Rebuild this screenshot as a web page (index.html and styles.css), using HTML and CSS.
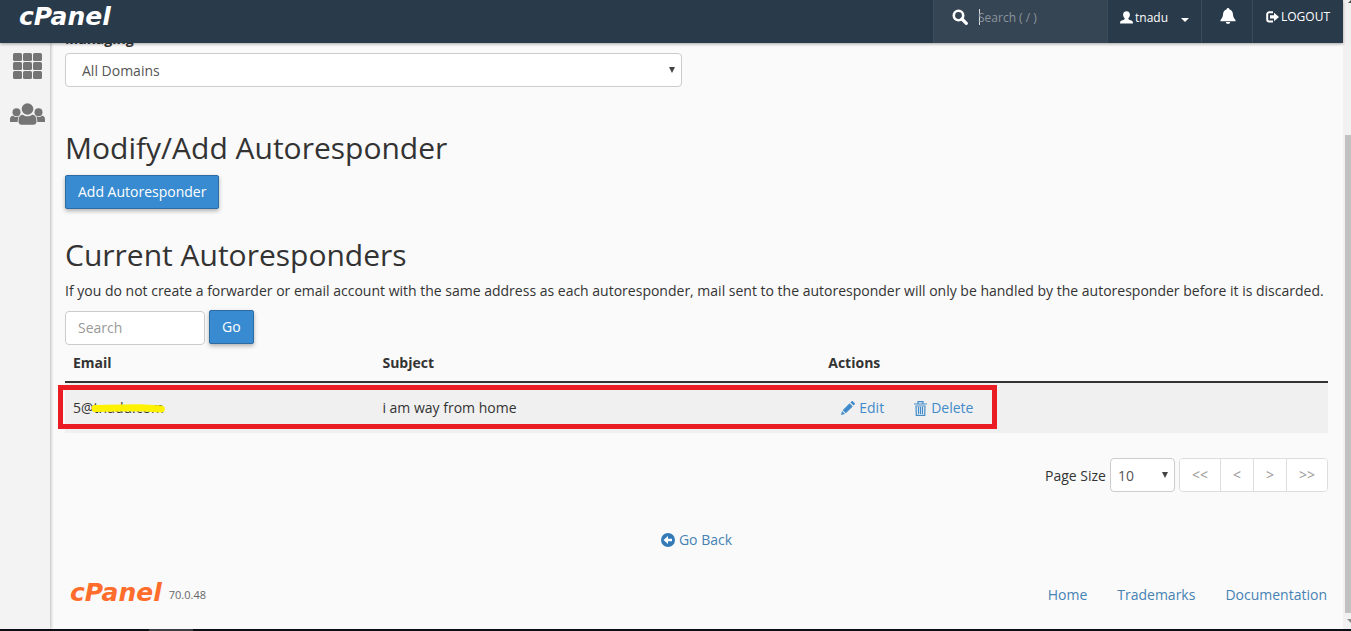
FILE: index.html
```html
<!DOCTYPE html>
<html lang="en">
<head>
<meta charset="utf-8">
<title>cPanel - Autoresponders</title>
<link rel="stylesheet" href="styles.css">
</head>
<body>
<div class="window">
  <div class="app">
    <header class="topbar">
      <a class="brand" href="#">cPanel</a>
      <div class="topsearch">
        <svg width="16" height="16" viewBox="0 0 16 16" aria-hidden="true"><circle cx="6.5" cy="6.5" r="4.7" fill="none" stroke="#fff" stroke-width="2.6"/><path d="M10 10l4.3 4.3" stroke="#fff" stroke-width="3.2" stroke-linecap="round"/></svg>
        <span class="caret"></span>
        <input type="text" aria-label="Search features" placeholder="Search ( / )">
      </div>
      <button class="topitem user" type="button">
        <svg width="13" height="13" viewBox="0 0 13 13" fill="#fff" aria-hidden="true"><path d="M6.500 .3c2.200 0 3.500 1.600 3.400 3.600-.1 1.500-.7 2.400-1.500 3.300v1.100c1.100.8 2.900 1 3.900 1.800.5.5.6 1.400.7 2.400H0c.1-1 .2-1.900.7-2.400 1-.8 2.800-1 3.900-1.800V7.200C3.800 6.300 3.200 5.400 3.100 3.900 3 1.900 4.300.3 6.500.3z"/></svg>
        <span>tnadu</span>
        <svg class="down" width="8" height="4" viewBox="0 0 8 4" fill="#fff" aria-hidden="true"><path d="M0 0h8L4 4z"/></svg>
      </button>
      <button class="topitem bell" type="button" aria-label="Notifications">
        <svg width="16" height="16" viewBox="0 0 16 16" fill="#fff" aria-hidden="true"><path d="M8 0c.8 0 1.300.6 1.300 1.300 2.200.6 3.400 2.300 3.600 4.500.2 2.700.7 4.500 2.600 6.100v1.300H.5v-1.300c1.900-1.600 2.400-3.400 2.600-6.100.2-2.200 1.400-3.900 3.600-4.500C6.700.6 7.200 0 8 0zM5.800 14h4.400c-.1 1.200-1 2-2.200 2s-2.100-.8-2.200-2z"/></svg>
      </button>
      <a class="topitem logout" href="#">
        <svg width="13" height="12" viewBox="0 0 13 12" aria-hidden="true"><path d="M7 1.300H3.200A2 2 0 0 0 1.200 3.300v5.200a2 2 0 0 0 2 2H7" fill="none" stroke="#fff" stroke-width="2"/><path d="M4 4.300h4V1.700L13 6 8 10.300V7.600H4z" fill="#fff"/></svg>
        <span>LOGOUT</span>
      </a>
    </header>
    <div class="body">
      <nav class="sidebar">
        <a href="#" aria-label="Home">
          <svg width="29" height="26" viewBox="0 0 29 26" fill="#757575" aria-hidden="true"><rect width="9" height="8" rx="1.500"/><rect x="10" width="9" height="8" rx="1.500"/><rect x="20" width="9" height="8" rx="1.500"/><rect y="9" width="9" height="8" rx="1.500"/><rect x="10" y="9" width="9" height="8" rx="1.500"/><rect x="20" y="9" width="9" height="8" rx="1.500"/><rect y="18" width="9" height="8" rx="1.500"/><rect x="10" y="18" width="9" height="8" rx="1.500"/><rect x="20" y="18" width="9" height="8" rx="1.500"/></svg>
        </a>
        <a href="#" aria-label="Users">
          <svg width="35" height="22" viewBox="0 0 35 22" fill="#757575" aria-hidden="true"><circle cx="6.500" cy="9.300" r="4"/><circle cx="28.500" cy="9.300" r="4"/><path d="M0 19v-2.500C0 14 1.200 12.800 3 12.800c1 .9 2 1.300 3.500 1.300.8 0 1.500-.2 2.300-.5C8 15.200 7.600 17 7.600 19z"/><path d="M35 19v-2.500c0-2.500-1.200-3.700-3-3.700-1 .9-2 1.300-3.500 1.300-.8 0-1.500-.2-2.300-.5.800 1.600 1.200 3.400 1.200 5.400z"/><circle cx="17.500" cy="6" r="5.800"/><path d="M8.500 18.500c0-4 1.300-6.700 4.500-6.700 1.300 1 2.700 1.500 4.500 1.500s3.200-.5 4.500-1.500c3.200 0 4.500 2.700 4.500 6.700 0 2-1 3.200-3 3.200h-12c-2 0-3-1.200-3-3.200z"/></svg>
        </a>
      </nav>
      <main class="content">
        <label class="managing" for="domain">Managing</label>
        <div class="select domain">
          <select id="domain"><option>All Domains</option></select>
          <svg width="6" height="6" viewBox="0 0 6 6" fill="#444" aria-hidden="true"><path d="M0 0h6L3 6z"/></svg>
        </div>
        <h2>Modify/Add Autoresponder</h2>
        <button class="btn primary" type="button">Add Autoresponder</button>
        <h2>Current Autoresponders</h2>
        <p>If you do not create a forwarder or email account with the same address as each autoresponder, mail sent to the autoresponder will only be handled by the autoresponder before it is discarded.</p>
        <form class="filter">
          <input type="text" aria-label="Search autoresponders" placeholder="Search">
          <button class="btn primary" type="button">Go</button>
        </form>
        <div class="tablewrap">
          <table>
            <thead><tr><th class="c-email">Email</th><th class="c-subject">Subject</th><th>Actions</th></tr></thead>
            <tbody><tr>
              <td><span class="email">5@<span class="masked">tnadu.com<svg class="marker" viewBox="0 0 74 9" preserveAspectRatio="none" aria-hidden="true"><path d="M3 4.500L30 4l18-.3L70 5" fill="none" stroke="#fff200" stroke-width="7" stroke-linecap="round"/></svg></span></span></td>
              <td>i am way from home</td>
              <td>
                <div class="actions">
                <a class="action" href="#"><svg width="14" height="14" viewBox="0 0 14 14" fill="#428bca" aria-hidden="true"><path d="M0 14l1-4 3 3zM1.700 9.200l6.900-6.900 3.100 3.100-6.900 6.900zM9.400 1.500L10.500.4c.5-.5 1-.5 1.500 0l1.600 1.600c.5.5.5 1 0 1.500l-1.100 1.100z"/></svg><span>Edit</span></a>
                <a class="action" href="#"><svg width="13" height="15" viewBox="0 0 13 15" fill="none" stroke="#428bca" aria-hidden="true"><path d="M0 3h13M4 3V.700h5V3M1.500 5h10M2 5l.3 9.300h8.400L11 5M4.500 6v7M6.500 6v7M8.500 6v7" stroke-width="1.200"/></svg><span>Delete</span></a>
                </div>
              </td>
            </tr></tbody>
          </table>
          <div class="highlight"></div>
        </div>
        <div class="paging">
          <label for="size">Page Size</label>
          <div class="select size">
            <select id="size"><option>10</option></select>
            <svg width="6" height="6" viewBox="0 0 6 6" fill="#444" aria-hidden="true"><path d="M0 0h6L3 6z"/></svg>
          </div>
          <div class="pager">
            <button type="button">&lt;&lt;</button><button type="button">&lt;</button><button type="button">&gt;</button><button type="button">&gt;&gt;</button>
          </div>
        </div>
        <a class="goback" href="#"><svg width="14" height="14" viewBox="0 0 14 14" aria-hidden="true"><circle cx="7" cy="7" r="7" fill="#337ab7"/><path d="M2.500 7L7 3v2.700h4v2.600H7V11z" fill="#fff"/></svg><span>Go Back</span></a>
        <footer class="footer">
          <a class="brand orange" href="#">cPanel</a>
          <span class="version">70.0.48</span>
          <nav class="links"><a href="#">Home</a><a href="#">Trademarks</a><a href="#">Documentation</a></nav>
        </footer>
      </main>
    </div>
  </div>
  <div class="scroll"><svg width="8" height="8" viewBox="0 0 8 8" aria-hidden="true"><path d="M5 3l3-3v3z" fill="#505050"/></svg><div class="thumb"></div><svg width="8" height="16" viewBox="0 0 8 16" aria-hidden="true"><path d="M4 6h4v4z" fill="#8a8a8a"/></svg></div>
</div>
<div class="taskbar"><div></div></div>
</body>
</html>
```
FILE: styles.css
```css
* { box-sizing: border-box; }
body {
  margin: 0;
  min-height: 100vh;
  display: flex;
  flex-direction: column;
  overflow: hidden;
  background: #fafafa;
  color: #333;
  font: 14px/20px "Open Sans", "Noto Sans", sans-serif;
}
button, input, select { font: inherit; color: inherit; margin: 0; }
a { color: #4682b4; text-decoration: none; }
svg { display: block; flex: none; }

.window { flex: 1; display: flex; }
.app { flex: 1; min-width: 0; display: flex; flex-direction: column; }

.topbar {
  position: relative;
  z-index: 2;
  display: flex;
  height: 43px;
  background: #293a4a;
  color: #fff;
  font-size: 12px;
  box-shadow: 0 1px 3px rgba(0, 0, 0, .35);
}
.brand {
  font: italic 700 25px/32px "DejaVu Sans", sans-serif;
  color: #fff;
}
.topbar .brand { margin: 1px auto 0 19px; }
.topsearch, .topitem {
  display: flex;
  align-items: center;
  padding-bottom: 9px;
  border: 0;
  border-left: 1px solid #3c4c5b;
}
.topsearch {
  width: 174px;
  padding-left: 18px;
  background: #364554;
}
.caret { width: 1px; height: 16px; margin-left: 11px; background: #ddd; }
.topsearch input {
  width: 100px;
  margin-left: -2px;
  padding: 2px 0 0;
  border: 0;
  background: none;
  outline: 0;
}
.topsearch input::placeholder { color: #8b949c; }
.topitem { background: none; color: #fff; }
.user { width: 94px; padding-left: 12px; gap: 2px; padding-right: 0; }
.user .down { margin-left: 11px; margin-top: 4px; }
.bell { width: 51px; justify-content: center; padding: 0 0 11px 1px; }
.logout { width: 91px; padding-left: 13px; gap: 2px; padding-bottom: 10px; }

.body { flex: 1; display: flex; }
.sidebar {
  z-index: 1;
  width: 50px;
  padding-top: 10px;
  display: flex;
  flex-direction: column;
  align-items: center;
  gap: 24px;
  background: #f3f3f3;
  box-shadow: 1px 0 3px rgba(0, 0, 0, .25);
}
.sidebar a { padding-left: 5px; }
.content {
  flex: 1;
  min-width: 0;
  overflow: clip;
  padding: 0 15px;
  display: flex;
  flex-direction: column;
  align-items: flex-start;
}
.managing { font-weight: 700; margin: -14px 0 4px; }

.select { position: relative; }
.select select {
  appearance: none;
  display: block;
  width: 100%;
  height: 34px;
  padding: 1px 16px 0;
  border: 1px solid #ccc;
  border-radius: 4px;
  background: #fff;
  color: #555;
}
.select svg { position: absolute; right: 7px; top: 14px; pointer-events: none; }
.domain { width: 617px; max-width: 100%; }
.size { width: 65px; }
.size select { padding: 1px 7px 0; }

h2 { margin: 29px 0 11px; font-size: 30px; line-height: 33px; font-weight: 400; }
.domain + h2 { margin-top: 44px; }
p { margin: -1px 0 9px; }

.btn { height: 34px; padding: 0 12px; border: 1px solid #2d6ca2; border-radius: 2px; }
.primary { background: #388bd0; color: #fff; box-shadow: 0 2px 4px rgba(0, 0, 0, .3); }
.filter { display: flex; align-items: flex-start; gap: 4px; }
.filter input {
  width: 140px;
  height: 34px;
  margin-top: 1px;
  padding: 0 12px 2px;
  border: 1px solid #ccc;
  border-radius: 4px;
  background: #fff;
}
.filter input::placeholder { color: #999; }

.tablewrap { position: relative; width: 100%; }
table { width: 100%; border-collapse: separate; border-spacing: 0; table-layout: fixed; }
th { padding: 8px; text-align: left; border-bottom: 2px solid #333; }
td { height: 50px; padding: 0 8px; background: #f0f0f0; }
.c-email { width: 24.5%; }
.c-subject { width: 35.3%; }
.masked { position: relative; }
.marker { position: absolute; left: -2px; top: 6px; width: calc(100% + 3px); height: 9px; }
.actions { display: flex; gap: 4px; }
.action { display: flex; align-items: center; gap: 4px; padding: 7px 13px; color: #428bca; }
.highlight {
  position: absolute;
  left: -7px;
  bottom: 4px;
  width: calc(74% + 4px);
  height: 44px;
  border: 5px solid #ea1c24;
  pointer-events: none;
}

.paging { align-self: flex-end; display: flex; align-items: center; gap: 4px; margin-top: 25px; }
.paging label { padding-top: 2px; }
.pager { display: flex; border: 1px solid #ddd; border-radius: 4px; overflow: hidden; }
.pager button {
  height: 32px;
  padding: 0 12px;
  border: 0;
  background: #fff;
  color: #999;
}
.pager button + button { border-left: 1px solid #ddd; }
.goback { align-self: center; display: flex; align-items: center; gap: 4px; margin-top: 38px; }

.footer { align-self: stretch; display: flex; align-items: center; margin-top: 27px; padding: 0 1px 0 5px; }
.footer .brand { color: #ff6c2c; }
.version { margin: 3px auto 0 7px; font-size: 11px; color: #666; }
.links { display: flex; gap: 30px; margin-top: 3px; }

.scroll { width: 8px; display: flex; flex-direction: column; background: #f1f1f1; }
.thumb { margin-top: auto; margin-left: 2px; height: 76%; background: #c1c1c1; }
.taskbar { height: 2px; background: #0b0e14; padding-left: 11%; }
.taskbar div { width: 44px; height: 2px; background: #3a3d42; }
```
